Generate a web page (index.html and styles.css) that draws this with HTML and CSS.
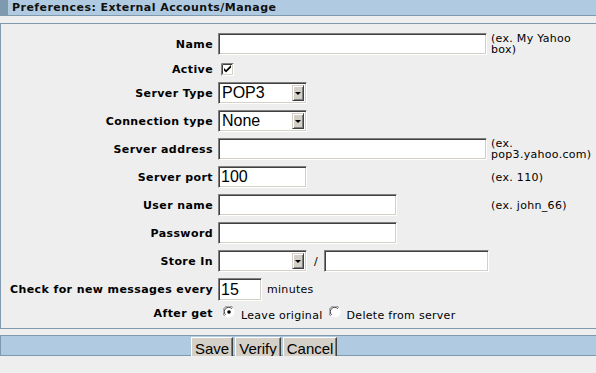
FILE: index.html
```html
<!DOCTYPE html>
<html lang="en">
<head>
    <meta charset="UTF-8">
    <title>Preferences: External Accounts/Manage</title>
    <link rel="stylesheet" href="styles.css">
</head>
<body>
<!-- Title bar -->
<div class="titlebar">
    <span class="titlebar-edge"></span>
    <h1>Preferences: External Accounts/Manage</h1>
</div>

<!-- Account form -->
<form class="prefs">
    <div class="form-grid">
        <label class="lbl">Name</label>
        <div class="field"><input class="text w-long" type="text"></div>
        <div class="hint">(ex. My Yahoo box)</div>

        <label class="lbl row-short">Active</label>
        <div class="field row-short">
            <svg class="check" width="13" height="13" viewBox="0 0 13 13">
                <rect width="13" height="13" fill="#fff"/>
                <path d="M0.5 12.5V0.5H12.5" stroke="#808080" fill="none"/>
                <path d="M1.5 11.5V1.5H11.5" stroke="#404040" fill="none"/>
                <path d="M1 11.5H11.5V1" stroke="#d4d0c8" fill="none"/>
                <path d="M3 5v2.4l2 2 5-5V2L5 7z" fill="#000"/>
            </svg>
        </div>
        <div class="hint"></div>

        <label class="lbl">Server Type</label>
        <div class="field">
            <div class="select"><span class="select-value">POP3</span><span class="select-btn"><i class="arrow"></i></span></div>
        </div>
        <div class="hint"></div>

        <label class="lbl">Connection type</label>
        <div class="field">
            <div class="select"><span class="select-value">None</span><span class="select-btn"><i class="arrow"></i></span></div>
        </div>
        <div class="hint"></div>

        <label class="lbl">Server address</label>
        <div class="field"><input class="text w-long" type="text"></div>
        <div class="hint">(ex. pop3.yahoo.com)</div>

        <label class="lbl">Server port</label>
        <div class="field"><input class="text w-short" type="text" value="100"></div>
        <div class="hint">(ex. 110)</div>

        <label class="lbl">User name</label>
        <div class="field"><input class="text w-mid" type="text"></div>
        <div class="hint">(ex. john_66)</div>

        <label class="lbl">Password</label>
        <div class="field"><input class="text w-mid" type="password"></div>
        <div class="hint"></div>

        <label class="lbl">Store In</label>
        <div class="field">
            <div class="select"><span class="select-value"></span><span class="select-btn"><i class="arrow"></i></span></div>
            <span class="sep">/</span>
            <input class="text w-folder" type="text">
        </div>
        <div class="hint"></div>

        <label class="lbl">Check for new messages every</label>
        <div class="field">
            <input class="text w-tiny" type="text" value="15">
            <span class="unit">minutes</span>
        </div>
        <div class="hint"></div>

        <label class="lbl row-radio">After get</label>
        <div class="field row-radio radios">
            <span class="radio-opt">
                <svg class="radio" width="12" height="12" viewBox="0 0 12 12">
                    <circle cx="6" cy="6" r="5.5" fill="#fff"/>
                    <path d="M1.6 9.9A5.5 5.5 0 0 1 9.9 1.6" stroke="#808080" fill="none"/>
                    <path d="M2.6 8.8A4.3 4.3 0 0 1 8.8 2.6" stroke="#404040" fill="none"/>
                    <circle cx="6" cy="6" r="1.8" fill="#000"/>
                </svg>
                Leave original
            </span>
            <span class="radio-opt">
                <svg class="radio" width="12" height="12" viewBox="0 0 12 12">
                    <circle cx="6" cy="6" r="5.5" fill="#fff"/>
                    <path d="M1.6 9.9A5.5 5.5 0 0 1 9.9 1.6" stroke="#808080" fill="none"/>
                    <path d="M2.6 8.8A4.3 4.3 0 0 1 8.8 2.6" stroke="#404040" fill="none"/>
                </svg>
                Delete from server
            </span>
        </div>
        <div class="hint row-radio"></div>
    </div>
</form>

<!-- Action buttons -->
<div class="actions">
    <button class="btn" type="button">Save</button>
    <button class="btn" type="button">Verify</button>
    <button class="btn" type="button">Cancel</button>
</div>
</body>
</html>
```

FILE: styles.css
```css
/* Page */
body {
    margin: 0;
    background: #eeeeee;
    font-family: "DejaVu Sans", Verdana, sans-serif;
    font-size: 11px;
    letter-spacing: 0.3px;
    color: #000;
}

/* Title bar */
.titlebar {
    display: flex;
    height: 15px;
    background: #b0cbe1;
    border-bottom: 1px solid #7f99af;
}
.titlebar-edge {
    width: 8px;
    background: #7f99af;
}
.titlebar h1 {
    margin: 0 0 0 4px;
    font-size: 11px;
    font-weight: bold;
    letter-spacing: 0.45px;
    line-height: 15px;
    color: #111;
}

/* Form box */
.prefs {
    margin: 7px 0 0 0;
    border: 1px solid #7f99af;
    border-right: none;
    padding: 9px 0 5px;
}
.form-grid {
    display: grid;
    grid-template-columns: 217px 273px 1fr;
    row-gap: 6px;
    align-items: center;
}
.lbl {
    font-weight: bold;
    letter-spacing: 0.4px;
    text-align: right;
    padding-right: 5px;
}
.field {
    display: flex;
    align-items: center;
}
.hint {
    line-height: 11px;
    padding-right: 2px;
}
.row-short {
    height: 15px;
    line-height: 13px;
    display: flex;
    align-items: flex-end;
    justify-content: flex-end;
}
.field.row-short {
    justify-content: flex-start;
}
.row-radio {
    height: 16px;
}

/* Classic inset text inputs */
.text {
    box-sizing: border-box;
    height: 22px;
    margin: 0;
    padding: 0 2px;
    border: 1px solid;
    border-color: #808080 #ffffff #ffffff #808080;
    box-shadow: inset 1px 1px 0 #404040, inset -1px -1px 0 #d4d0c8;
    background: #fff;
    font-family: "Liberation Sans", Arial, sans-serif;
    font-size: 16px;
    letter-spacing: 0;
    outline: none;
}
.w-long { width: 269px; }
.w-mid { width: 179px; }
.w-short { width: 89px; }
.w-folder { width: 165px; }
.w-tiny { width: 44px; height: 23px; }

/* Fake select box */
.select {
    box-sizing: border-box;
    display: flex;
    width: 89px;
    height: 22px;
    padding: 2px;
    border: 1px solid;
    border-color: #808080 #ffffff #ffffff #808080;
    box-shadow: inset 1px 1px 0 #404040, inset -1px -1px 0 #d4d0c8;
    background: #fff;
}
.select-value {
    flex: 1;
    font-family: "Liberation Sans", Arial, sans-serif;
    font-size: 16px;
    letter-spacing: 0;
    line-height: 16px;
    padding-left: 1px;
}
.select-btn {
    box-sizing: border-box;
    width: 12px;
    display: flex;
    align-items: center;
    justify-content: center;
    background: #d4d0c8;
    border: 1px solid;
    border-color: #d4d0c8 #404040 #404040 #d4d0c8;
    box-shadow: inset 1px 1px 0 #fff, inset -1px -1px 0 #808080;
}
.arrow {
    width: 0;
    height: 0;
    border-left: 3px solid transparent;
    border-right: 3px solid transparent;
    border-top: 3px solid #000;
}
.sep {
    margin: 0 6px 0 7px;
}
.unit {
    margin-left: 5px;
}

/* Checkbox and radios */
.check {
    margin-left: 3px;
}
.radios {
    gap: 1px;
}
.radio-opt {
    display: flex;
    align-items: center;
}
.radio {
    margin: 0 6px 0 5px;
    position: relative;
    top: -3px;
}

/* Button bar */
.actions {
    display: flex;
    align-items: flex-start;
    gap: 2px;
    height: 19px;
    margin-top: 6px;
    padding-left: 190px;
    background: #b0cbe1;
    border: 1px solid #7f99af;
    border-right: none;
}
.btn {
    box-sizing: border-box;
    height: 23px;
    margin-top: 1px;
    padding: 0 3px;
    background: #d4d0c8;
    border: 1px solid;
    border-color: #ffffff #404040 #404040 #ffffff;
    box-shadow: inset -1px -1px 0 #808080;
    font-family: "Liberation Sans", Arial, sans-serif;
    font-size: 15px;
    letter-spacing: 0;
    color: #000;
}
```
